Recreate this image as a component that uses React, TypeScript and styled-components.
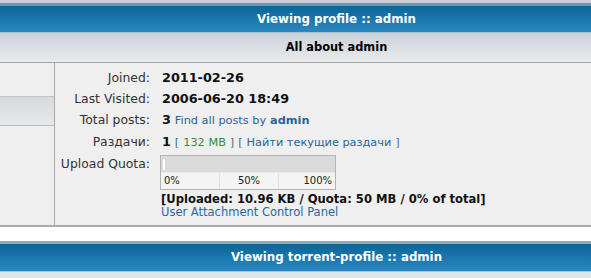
import React from "react";
import styled, { createGlobalStyle } from "styled-components";

const GlobalStyle = createGlobalStyle`
  html, body {
    margin: 0;
    padding: 0;
    background: #fff;
  }
  body {
    font-family: "DejaVu Sans", Verdana, sans-serif;
    width: 591px;
    height: 278px;
    overflow: hidden;
  }
`;

const Panel = styled.div`
  border-top: 3px solid #c6d1d8;
`;

const HeadBar = styled.div`
  height: 26px;
  line-height: 26px;
  padding-left: 82px;
  text-align: center;
  color: #fff;
  font-size: 11.8px;
  font-weight: bold;
  background: linear-gradient(#0a6598, #2b88bf);
  border-top: 3px solid #6e96b3;
  border-bottom: 1px solid #a8c1cf;
`;

const SubBar = styled.div`
  height: 29px;
  line-height: 29px;
  padding-left: 82px;
  text-align: center;
  color: #000;
  font-size: 11.4px;
  font-weight: bold;
  background: linear-gradient(#c9d1d9, #e9ebed);
  border-bottom: 1px solid #a3a6a8;
`;

const Body = styled.div`
  display: grid;
  grid-template-columns: 55px 1fr;
  background: #efefef;
  border-bottom: 2px solid #a9abad;
`;

const SideCell = styled.div`
  border-right: 1px solid #a9a9a9;
  padding-top: 33px;
`;

const SideItem = styled.div`
  height: 28px;
  background: linear-gradient(#d7d9db, #e6e8ea);
  border-top: 1px solid #c3c5c7;
  border-bottom: 1px solid #b9bbbd;
`;

const InfoGrid = styled.div`
  display: grid;
  grid-template-columns: 95px 1fr;
  column-gap: 10px;
  padding: 4px 0 6px;
  font-size: 12.4px;
`;

const Label = styled.div`
  height: 21px;
  line-height: 21px;
  text-align: right;
  color: #333;
  white-space: nowrap;
`;

const Value = styled.div`
  min-height: 21px;
  line-height: 21px;
  padding-left: 2px;
  color: #000;
  white-space: nowrap;
`;

const Strong = styled.b`
  font-size: 12.8px;
  color: #111;
`;

const Link = styled.a<{ $bold?: boolean }>`
  color: #26649a;
  font-weight: ${({ $bold }) => ($bold ? "bold" : "normal")};
  text-decoration: none;
  font-size: 11.3px;
`;

const Bracket = styled.span`
  color: #4f6e86;
  font-size: 11.3px;
`;

const Size = styled.span`
  color: #3b8a3b;
  font-size: 11.3px;
`;

const QuotaCell = styled.div`
  padding-top: 2px;
`;

const QuotaBox = styled.div`
  width: 174px;
  border: 1px solid #b3b3b3;
  background: #f4f4f4;
`;

const QuotaTrack = styled.div`
  height: 16px;
  background: #dadada;
  border-bottom: 1px solid #e8e8e8;
  display: flex;
`;

const QuotaFill = styled.div`
  width: 2px;
  margin: 3px 0 2px 2px;
  background: #fff;
`;

const Scale = styled.div`
  display: grid;
  grid-template-columns: 58px 59px 1fr;
  height: 16px;
  font-size: 10px;
  line-height: 16px;
  color: #222;
`;

const Tick = styled.div<{ $align: string }>`
  text-align: ${({ $align }) => $align};
  padding: 0 3px;
  border-left: 1px solid #e2e2e2;
  &:first-child {
    border-left: none;
  }
`;

const QuotaText = styled.div`
  font-size: 11.6px;
  font-weight: bold;
  line-height: 13px;
  margin-top: 3px;
  padding-left: 1px;
  color: #111;
`;

const PanelLink = styled.a`
  display: block;
  font-size: 11.5px;
  line-height: 13px;
  padding-left: 1px;
  color: #2a689d;
  text-decoration: none;
`;

const Gap = styled.div`
  height: 14px;
  background: #fff;
`;

const NextPanel = styled.div`
  border-top: 3px solid #8eabbb;
`;

const NextHead = styled(HeadBar)`
  border-top: none;
  height: 27px;
  line-height: 27px;
`;

const NextBody = styled.div`
  height: 8px;
  background: #e0e5e8;
`;

const App = () => (
  <>
    <GlobalStyle />
    <Panel>
      <HeadBar>Viewing profile :: admin</HeadBar>
      <SubBar>All about admin</SubBar>
      <Body>
        <SideCell>
          <SideItem />
        </SideCell>
        <InfoGrid>
          <Label>Joined:</Label>
          <Value>
            <Strong>2011-02-26</Strong>
          </Value>
          <Label>Last Visited:</Label>
          <Value>
            <Strong>2006-06-20 18:49</Strong>
          </Value>
          <Label>Total posts:</Label>
          <Value>
            <Strong>3</Strong> <Link href="#">Find all posts by</Link>{" "}
            <Link href="#" $bold>
              admin
            </Link>
          </Value>
          <Label>Раздачи:</Label>
          <Value>
            <Strong>1</Strong> <Bracket>[</Bracket> <Size>132 MB</Size>{" "}
            <Bracket>]</Bracket> <Bracket>[</Bracket>{" "}
            <Link href="#">Найти текущие раздачи</Link> <Bracket>]</Bracket>
          </Value>
          <Label>Upload Quota:</Label>
          <QuotaCell>
            <QuotaBox>
              <QuotaTrack>
                <QuotaFill />
              </QuotaTrack>
              <Scale>
                <Tick $align="left">0%</Tick>
                <Tick $align="center">50%</Tick>
                <Tick $align="right">100%</Tick>
              </Scale>
            </QuotaBox>
            <QuotaText>
              [Uploaded: 10.96 KB / Quota: 50 MB / 0% of total]
            </QuotaText>
            <PanelLink href="#">User Attachment Control Panel</PanelLink>
          </QuotaCell>
        </InfoGrid>
      </Body>
      <Gap />
      <NextPanel>
        <NextHead>Viewing torrent-profile :: admin</NextHead>
        <NextBody />
      </NextPanel>
    </Panel>
  </>
);

export default App;
